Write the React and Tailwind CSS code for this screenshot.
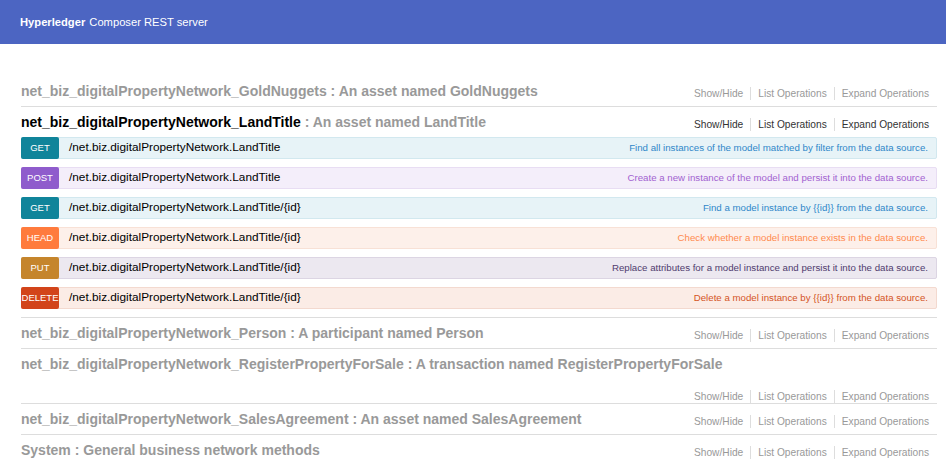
import React from 'react';

const ops = [
  { method: 'GET', path: '/net.biz.digitalPropertyNetwork.LandTitle', desc: 'Find all instances of the model matched by filter from the data source.' },
  { method: 'POST', path: '/net.biz.digitalPropertyNetwork.LandTitle', desc: 'Create a new instance of the model and persist it into the data source.' },
  { method: 'GET', path: '/net.biz.digitalPropertyNetwork.LandTitle/{id}', desc: 'Find a model instance by {{id}} from the data source.' },
  { method: 'HEAD', path: '/net.biz.digitalPropertyNetwork.LandTitle/{id}', desc: 'Check whether a model instance exists in the data source.' },
  { method: 'PUT', path: '/net.biz.digitalPropertyNetwork.LandTitle/{id}', desc: 'Replace attributes for a model instance and persist it into the data source.' },
  { method: 'DELETE', path: '/net.biz.digitalPropertyNetwork.LandTitle/{id}', desc: 'Delete a model instance by {{id}} from the data source.' },
];

const styles = {
  GET: { row: 'bg-[#e7f3f7] border-[#d2e8ef]', badge: 'bg-[#10849a]', desc: 'text-[#2f87c9]' },
  POST: { row: 'bg-[#f4eefa] border-[#e8ddf3]', badge: 'bg-[#8f5ccc]', desc: 'text-[#a262d0]' },
  HEAD: { row: 'bg-[#fdf0ea] border-[#f8e1d6]', badge: 'bg-[#ff7b3d]', desc: 'text-[#ff8a4e]' },
  PUT: { row: 'bg-[#ece8f0] border-[#dcd5e3]', badge: 'bg-[#c5852c]', desc: 'text-[#4f3b6e]' },
  DELETE: { row: 'bg-[#fbece6] border-[#f3d9cf]', badge: 'bg-[#d2441a]', desc: 'text-[#d4541f]' },
};

const sections = [
  { name: 'net_biz_digitalPropertyNetwork_GoldNuggets', desc: 'An asset named GoldNuggets' },
  { name: 'net_biz_digitalPropertyNetwork_LandTitle', desc: 'An asset named LandTitle', open: true },
  { name: 'net_biz_digitalPropertyNetwork_Person', desc: 'A participant named Person' },
  { name: 'net_biz_digitalPropertyNetwork_RegisterPropertyForSale', desc: 'A transaction named RegisterPropertyForSale' },
  { name: 'net_biz_digitalPropertyNetwork_SalesAgreement', desc: 'An asset named SalesAgreement' },
  { name: 'System', desc: 'General business network methods' },
];

const Links = ({ active }) => (
  <ul className={`ml-auto flex pt-[11px] pr-[8px] text-[10.2px] leading-[13px] ${active ? 'text-[#333]' : 'text-[#999]'}`}>
    <li className="pr-[7px]">Show/Hide</li>
    <li className="px-[7px] border-l border-[#ddd]">List Operations</li>
    <li className="pl-[7px] border-l border-[#ddd]">Expand Operations</li>
  </ul>
);

const Operation = ({ op }) => {
  const s = styles[op.method];
  return (
    <li className={`flex items-center h-[22px] mb-[8px] border rounded-[2px] ${s.row}`}>
      <span className={`-ml-px -my-px h-[22px] w-[38px] flex items-center justify-center rounded-[2px] text-white text-[9.5px] ${s.badge}`}>
        {op.method}
      </span>
      <span className="ml-[10px] text-[11.8px] text-black">{op.path}</span>
      <span className={`ml-auto pr-[8px] text-[9.7px] ${s.desc}`}>{op.desc}</span>
    </li>
  );
};

const Section = ({ sec }) => (
  <li className="border-b border-[#ddd] last:border-b-0">
    <div className="flex flex-wrap items-start">
      <h2 className="text-[14px] leading-[30px] font-bold text-[#999]">
        <span className={sec.open ? 'text-black' : ''}>{sec.name}</span> : {sec.desc}
      </h2>
      <Links active={sec.open} />
    </div>
    {sec.open && (
      <ul>
        {ops.map((op, i) => (
          <Operation key={i} op={op} />
        ))}
      </ul>
    )}
  </li>
);

export default function App() {
  return (
    <div className="w-[946px] h-[464px] overflow-hidden bg-white font-['Liberation_Sans',Arial,sans-serif]">
      <header className="h-[44px] bg-[#4c65c2] flex items-center px-[20px] text-white text-[11.2px]">
        <span className="font-bold">Hyperledger</span>
        <span className="ml-[4px]">Composer REST server</span>
      </header>
      <ul className="pt-[32px] pl-[21px] pr-[9px]">
        {sections.map((sec, i) => (
          <Section key={i} sec={sec} />
        ))}
      </ul>
    </div>
  );
}
